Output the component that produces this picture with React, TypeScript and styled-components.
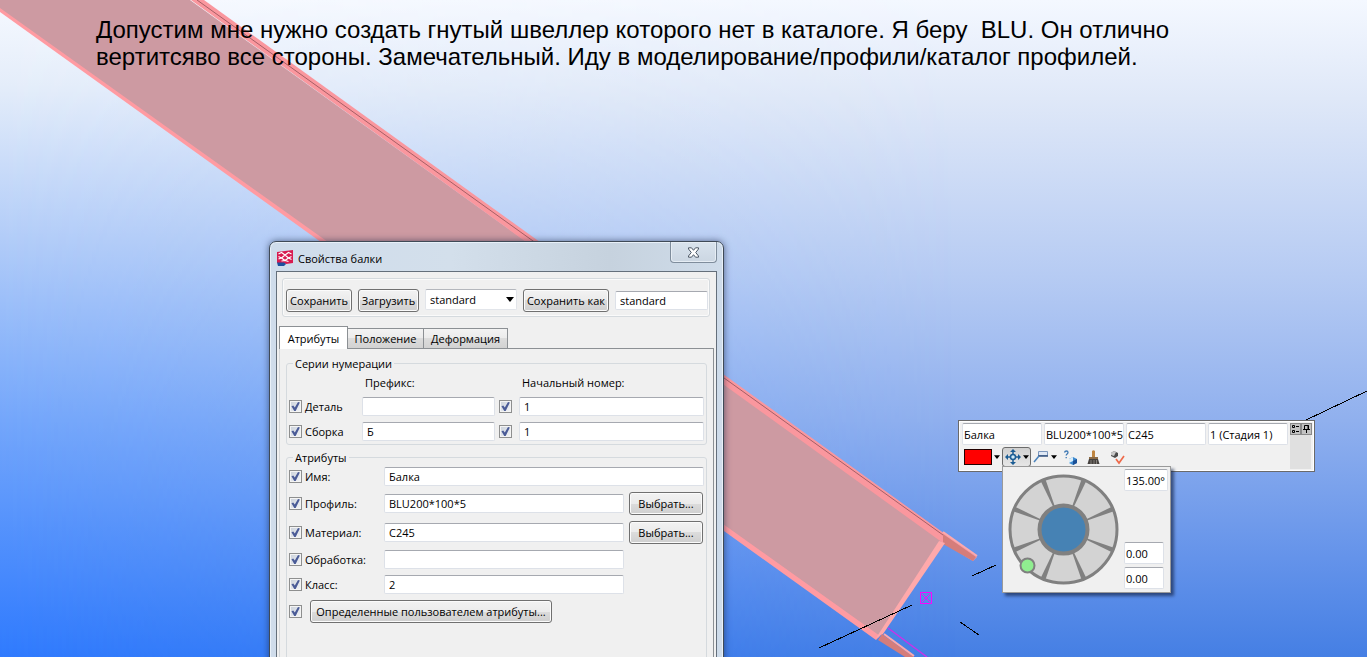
import React from "react";
import styled, { createGlobalStyle, css } from "styled-components";

const Global = createGlobalStyle`
  *, *::before, *::after { box-sizing: border-box; }
  body { margin: 0; }
  body, input, button, select {
    font-family: "Open Sans", "Noto Sans", sans-serif;
    font-size: 11px;
    line-height: 15px;
    color: #000;
  }
`;

/* ---------- model view ---------- */

const Viewport = styled.main`
  position: relative;
  height: 100vh;
  overflow: hidden;
  background: linear-gradient(#f4f8ff 0%, #dfe8f8 15%, #b6cbf3 42%, #90b0ee 64%, #6493ea 85%, #457fe4 100%);

  &::before {
    content: "";
    position: absolute;
    inset: 0;
    background: linear-gradient(#f6f9ff 0%, #e4edfa 13%, #b0cbf8 37%, #73a6fb 64%, #2f7afe 100%);
    mask-image: linear-gradient(90deg, #000, transparent 70%);
  }
`;

const Model = styled.svg`
  position: absolute;
  inset: 0;
  width: 100%;
  height: 100%;
`;

const Caption = styled.p`
  position: relative;
  margin: 0;
  padding: 16px 150px 0 96px;
  font-family: "Liberation Sans", Arial, sans-serif;
  font-size: 24px;
  line-height: 27px;
  white-space: pre-wrap;
`;

/* ---------- shared controls ---------- */

const Field = styled.input<{ $w?: string; $tall?: boolean }>`
  width: ${(p) => p.$w ?? "100%"};
  min-width: 0;
  height: ${(p) => (p.$tall ? 22 : 19)}px;
  padding: ${(p) => (p.$tall ? "0 0 0 1px" : "0 4px")};
  border: 1px solid #dde1e8;
  border-top-color: #a6a9b0;
  border-radius: 2px;
  background: #fff;
  outline: none;
`;

const Button = styled.button<{ $w: number }>`
  flex: none;
  width: ${(p) => p.$w}px;
  height: 23px;
  padding: 0;
  border: 1px solid #707070;
  border-radius: 3px;
  box-shadow: inset 0 0 0 1px #fbfbfb;
  background: linear-gradient(#f2f2f2 0%, #ebebeb 50%, #dcdcdc 50%, #cfcfcf 100%);
  white-space: nowrap;
`;

const Check = styled.input.attrs({ type: "checkbox" })`
  appearance: none;
  position: relative;
  flex: none;
  width: 13px;
  height: 13px;
  margin: 0;
  border: 1px solid #8e8f8f;
  background: linear-gradient(135deg, #c9d0da, #f4f5f7);
  box-shadow: inset 0 0 0 1px #f4f4f4;

  &:checked::after {
    content: "";
    position: absolute;
    inset: 1px;
    background: #4a5b97;
    clip-path: polygon(5% 48%, 25% 40%, 42% 62%, 78% 0, 98% 6%, 52% 100%, 36% 100%);
  }
`;

/* ---------- properties dialog ---------- */

const Dialog = styled.section`
  position: absolute;
  top: 241px;
  left: 269px;
  bottom: -8px;
  display: flex;
  flex-direction: column;
  width: 455px;
  padding: 0 6px;
  border: 1px solid #3f4a57;
  border-radius: 7px;
  box-shadow: inset 0 0 0 1px #e8f0f8, 0 0 7px rgba(20, 30, 60, 0.6);
  background: linear-gradient(90deg, #cfdceb, #d3dfeb 40%, #c6d2de 75%, #cfdcea);
`;

const TitleBar = styled.header`
  display: flex;
  align-items: flex-start;
  justify-content: space-between;
  height: 29px;
`;

const Title = styled.h1`
  display: flex;
  align-items: center;
  gap: 5px;
  margin: 0;
  padding: 8px 0 0 1px;
  font-size: 11px;
  font-weight: 400;
  line-height: 15px;
`;

const CloseButton = styled.button`
  display: flex;
  align-items: center;
  justify-content: center;
  width: 47px;
  height: 21px;
  padding: 0;
  border: 1px solid #7f8d9c;
  border-top: 0;
  border-radius: 0 0 4px 4px;
  background: linear-gradient(#d9e3ed, #cbd6e2);
  box-shadow: inset 0 0 0 1px #e6edf4;
`;

const DialogBody = styled.div`
  flex: 1;
  display: flex;
  flex-direction: column;
  padding: 6px 2px 0;
  border: 1px solid #646f7b;
  border-bottom: 0;
  background: #f0f0f0;
`;

const PresetBar = styled.div`
  display: flex;
  align-items: center;
  gap: 6px;
  margin: 0 4px 9px 3px;
  padding: 10px 1px 4px 3px;
  border: 1px solid #d5dade;
  border-radius: 3px;
  box-shadow: inset 0 0 0 1px #fafafa;
`;

const SelectBox = styled.span`
  position: relative;
  align-self: flex-start;
  flex: none;
  width: 92px;
  height: 21px;

  svg {
    position: absolute;
    right: 3px;
    top: 8px;
    pointer-events: none;
  }
`;

const Select = styled.select`
  appearance: none;
  width: 100%;
  height: 100%;
  padding: 0 4px;
  border: 1px solid #e2e5ea;
  border-top-color: #b4b7bd;
  border-radius: 2px;
  background: #fff;
`;

const TabList = styled.div`
  display: flex;
  align-items: flex-end;
  height: 22px;
`;

const Tab = styled.button<{ $w: number }>`
  width: ${(p) => p.$w}px;
  height: 20px;
  padding: 0;
  border: 1px solid #8c9094;
  border-left-width: 0;
  border-bottom: 0;
  background: linear-gradient(#f3f3f3, #ebebeb 50%, #dcdcdc 50%, #d2d2d2);
  white-space: nowrap;

  &[aria-selected="true"] {
    position: relative;
    height: 23px;
    margin-bottom: -1px;
    border-left-width: 1px;
    background: #fff;
  }
`;

const TabPanel = styled.div`
  flex: 1;
  display: flex;
  flex-direction: column;
  gap: 5px;
  padding: 7px 6px 0;
  border: 1px solid #8c9094;
  border-left-color: #d3d6d9;
  border-bottom: 0;
`;

const Group = styled.fieldset<{ $grow?: boolean }>`
  min-width: 0;
  margin: 0;
  padding: 0 2px;
  border: 1px solid #d5dade;
  border-radius: 3px;
  ${(p) => p.$grow && css`flex: 1;`}
`;

const Legend = styled.legend`
  margin-left: 4px;
  padding: 0 2px;
  line-height: 15px;
`;

const NumberingRow = styled.div<{ $header?: boolean }>`
  display: grid;
  grid-template-columns: 73px 133px 24px 1fr;
  align-items: center;
  height: ${(p) => (p.$header ? 23 : 25)}px;

  > ${Check} {
    margin-left: 4px;
  }
`;

const ColumnTitle = styled.span<{ $col: number }>`
  grid-column: ${(p) => p.$col};
  padding-left: 3px;
`;

const AttributeRow = styled.div<{ $h: number }>`
  display: grid;
  grid-template-columns: 95px 240px 1fr;
  align-items: center;
  height: ${(p) => p.$h}px;

  > ${Button} {
    margin-left: 5px;
  }
`;

const WideField = styled(Field)`
  grid-column: 2 / -1;
`;

const UserRow = styled.div`
  display: flex;
  align-items: center;
  gap: 8px;
  height: 31px;
`;

const Caps = styled.span`
  display: flex;
  align-items: center;
  gap: 3px;
  white-space: nowrap;
`;

/* ---------- contextual toolbar ---------- */

const ContextToolbar = styled.section`
  position: absolute;
  top: 420px;
  left: 958px;
  display: flex;
  gap: 2px;
  width: 357px;
  padding: 2px 3px;
  border: 1px solid #6a6a6a;
  background: #f1f1f1;
  box-shadow: inset 0 0 0 1px #fff;
`;

const ToolbarMain = styled.div`
  flex: 1;
  display: flex;
  flex-direction: column;
  gap: 2px;
`;

const ToolbarFields = styled.div`
  display: grid;
  grid-template-columns: repeat(4, 1fr);
  gap: 2px;
`;

const ToolbarIcons = styled.div`
  display: flex;
  align-items: center;
  height: 22px;
  padding-bottom: 2px;
`;

const ToolButton = styled.button<{ $w: number; $pressed?: boolean }>`
  display: flex;
  align-items: center;
  justify-content: center;
  gap: 2px;
  width: ${(p) => p.$w}px;
  height: 20px;
  padding: 0;
  border: 1px solid transparent;
  border-radius: 3px;
  background: none;
  ${(p) =>
    p.$pressed &&
    css`
      border-color: #6b6b6b;
      background: linear-gradient(#d0d0d0, #e6e6e6);
    `}
`;

const Swatch = styled.span`
  width: 28px;
  height: 16px;
  border: 1px solid #200;
  background: #f00;
`;

const ToolbarSide = styled.div`
  display: flex;
  align-items: flex-start;
  width: 21px;
  background: #e0e0e0;
`;

const SideButton = styled.button`
  display: flex;
  width: 11px;
  height: 12px;
  padding: 0;
  border: 1px solid #8a8a8a;
  background: #c2c2c2;
`;

const RotationPopup = styled.section`
  position: absolute;
  top: 466px;
  left: 1002px;
  display: flex;
  gap: 5px;
  width: 169px;
  height: 127px;
  padding: 2px 2px 3px 5px;
  border: 1px solid #9a9a9a;
  background: #f0f0f0;
  box-shadow: 3px 3px 3px rgba(20, 35, 70, 0.65);
`;

const Wheel = styled.svg`
  flex: none;
  align-self: center;
`;

const AngleFields = styled.div`
  display: flex;
  flex-direction: column;
  gap: 3px;

  > :first-child {
    margin-bottom: auto;
  }
`;

/* ---------- drawings ---------- */

const Caret = ({ w = 6 }: { w?: number }) => (
  <svg width={w} height={w === 6 ? 4 : 5} viewBox="0 0 8 5" aria-hidden="true">
    <path d="M0 0h8L4 5z" fill="#000" />
  </svg>
);

const AppIcon = () => (
  <svg width="16" height="16" viewBox="0 0 16 16" aria-hidden="true">
    <path d="M0 2l16-2v13l-7 1-3-1-6 0z" fill="#d81b50" />
    <path d="M0 12.500h7l2 1.500-2 2H1z" fill="#1d4f9e" />
    <path d="M1.500 4l3-1.500L8 5l3.500-2.500 3 1.500M1.500 6.500l3 1.500L8 5l3.500 3 3-1.500M1.500 9l3-1L8 10.500 11.500 8l3 1.500M4.500 11L8 10.500l3.500 1" fill="none" stroke="#fff" strokeWidth="1.200" />
  </svg>
);

const CloseIcon = () => (
  <svg width="13" height="11" viewBox="0 0 13 11" aria-hidden="true">
    <path d="M1.500.800h3L6.500 3.300 8.500.800h3v1.200L8.700 5.500l2.800 3.500v1.200h-3l-2-2.500-2 2.500h-3V9l2.800-3.500L1.500 2z" fill="#fff" stroke="#4c5866" />
  </svg>
);

const MoveIcon = () => (
  <svg width="16" height="16" viewBox="0 0 16 16" aria-hidden="true">
    <g fill="none" stroke="#1c5d94" strokeWidth="1.500">
      <circle cx="8" cy="8" r="2.500" fill="#cfeaf8" />
      <path d="M8 1v4M8 11v4M1 8h4M11 8h4" />
    </g>
    <path d="M8 0l3 3H5zM8 16l3-3H5zM0 8l3-3v6zM16 8l-3-3v6z" fill="#1c5d94" />
  </svg>
);

const PlaneIcon = () => (
  <svg width="16" height="14" viewBox="0 0 16 14" aria-hidden="true">
    <path d="M5.500 1.500h9v4h-9z" fill="#dfe8f5" stroke="#7c97bd" />
    <path d="M5 6h10" stroke="#33507c" strokeWidth="1.500" />
    <path d="M1 12l5-6" stroke="#4b83bb" strokeWidth="1.500" />
  </svg>
);

const AskIcon = () => (
  <svg width="15" height="15" viewBox="0 0 15 15" aria-hidden="true">
    <path d="M1.500 2.500C2 .500 5 .500 5 2.500 5 4 3.200 4 3.200 5.500M3.200 7v1.300" fill="none" stroke="#3d78b4" strokeWidth="1.300" />
    <path d="M6 9l4-2 4 2v4l-4 2-4-2z" fill="#3d8ad0" />
    <path d="M6 9l4-2v4l-4 2z" fill="#d9eefb" />
    <path d="M10 11l4-2v4l-4 2z" fill="#1b4f95" />
  </svg>
);

const BrushIcon = () => (
  <svg width="13" height="15" viewBox="0 0 13 15" aria-hidden="true">
    <path d="M5 1q1.500-1.500 3 0v6H5z" fill="#c0853f" />
    <path d="M2 7h9v2H2z" fill="#8c6b45" />
    <path d="M2 9h9l1.500 5H.500z" fill="#45413e" />
    <path d="M4 10v4M7 10v4M9.500 10v4" stroke="#85807b" />
  </svg>
);

const VerifyIcon = () => (
  <svg width="15" height="15" viewBox="0 0 15 15" aria-hidden="true">
    <path d="M1 3l3-2 4 2v3L5 8 1 6z" fill="#4b4b4b" />
    <path d="M1 3l3-2 2 1-2 4-3-1z" fill="#c9c9c9" />
    <path d="M6 9l3 4 5-7" fill="none" stroke="#ee6a4a" strokeWidth="1.700" />
  </svg>
);

const spokes = [22.5, 67.5, 112.5, 157.5, 202.5, 247.5, 292.5, 337.5];

const Scene = () => (
  <Model viewBox="0 0 1367 657" preserveAspectRatio="xMinYMin slice" aria-hidden="true">
    <path d="M0 0H190L943 541L878 638L0 9z" fill="#cd9aa2" />
    <path d="M0 8L880 636L876 640L0 12z" fill="#ff9ba2" />
    <path d="M191 0H204L977 557L973 561L943 543z" fill="#fa979e" />
    <path d="M943 534L976 557L973 561L943 544z" fill="#d57d7b" />
    <path d="M943 532L977 556" stroke="#ffa9ab" strokeWidth="2" />
    <path d="M197 0L943 535" stroke="#a65f66" />
    <path d="M939 541L945 543L883 634L876 638z" fill="#ffa9ab" />
    <path d="M882 634L914 657H905L878 640z" fill="#d57d7b" />
    <path d="M884 634L914 656" stroke="#ffa9ab" strokeWidth="2" />
    <g fill="none" stroke="#000" shapeRendering="crispEdges">
      <path d="M819 648L912 605M972 576L996 565M960 622L979 635M1304 421L1367 391" />
    </g>
    <g fill="none" stroke="#f0f">
      <path d="M888 628L927 657" stroke="#c832ea" strokeWidth="1.500" />
      <path d="M920.500 592.500h11v11h-11zM922 594l8 8M930 594l-8 8" />
    </g>
  </Model>
);

/* ---------- composition ---------- */

const Toggle = ({ id, label }: { id: string; label: string }) => (
  <Caps>
    <Check id={id} defaultChecked />
    <label htmlFor={id}>{label}</label>
  </Caps>
);

const attributes = [
  { id: "name", label: "Имя:", value: "Балка", h: 23, wide: true },
  { id: "profile", label: "Профиль:", value: "BLU200*100*5", h: 31, pick: true },
  { id: "material", label: "Материал:", value: "C245", h: 27, pick: true },
  { id: "finish", label: "Обработка:", value: "", h: 27 },
  { id: "class", label: "Класс:", value: "2", h: 23 },
];

const BeamProperties = () => (
  <Dialog role="dialog" aria-labelledby="dialog-title">
    <TitleBar>
      <Title id="dialog-title">
        <AppIcon />
        Свойства балки
      </Title>
      <CloseButton aria-label="Закрыть">
        <CloseIcon />
      </CloseButton>
    </TitleBar>
    <DialogBody>
      <PresetBar>
        <Button $w={66}>Сохранить</Button>
        <Button $w={61}>Загрузить</Button>
        <SelectBox>
          <Select aria-label="Набор" defaultValue="standard">
            <option>standard</option>
          </Select>
          <Caret w={8} />
        </SelectBox>
        <Button $w={86}>Сохранить как</Button>
        <Field aria-label="Имя набора" defaultValue="standard" />
      </PresetBar>
      <TabList role="tablist">
        <Tab role="tab" aria-selected="true" $w={69}>Атрибуты</Tab>
        <Tab role="tab" aria-selected="false" $w={76}>Положение</Tab>
        <Tab role="tab" aria-selected="false" $w={84}>Деформация</Tab>
      </TabList>
      <TabPanel role="tabpanel">
        <Group>
          <Legend>Серии нумерации</Legend>
          <NumberingRow $header>
            <ColumnTitle $col={2}>Префикс:</ColumnTitle>
            <ColumnTitle $col={4}>Начальный номер:</ColumnTitle>
          </NumberingRow>
          <NumberingRow>
            <Toggle id="part" label="Деталь" />
            <Field aria-label="Префикс детали" />
            <Check aria-label="Номер детали" defaultChecked />
            <Field aria-label="Начальный номер детали" defaultValue="1" />
          </NumberingRow>
          <NumberingRow>
            <Toggle id="assembly" label="Сборка" />
            <Field aria-label="Префикс сборки" defaultValue="Б" />
            <Check aria-label="Номер сборки" defaultChecked />
            <Field aria-label="Начальный номер сборки" defaultValue="1" />
          </NumberingRow>
        </Group>
        <Group $grow>
          <Legend>Атрибуты</Legend>
          {attributes.map((a) => {
            const Box = a.wide ? WideField : Field;
            return (
              <AttributeRow key={a.id} $h={a.h}>
                <Toggle id={a.id} label={a.label} />
                <Box aria-label={a.label} defaultValue={a.value} />
                {a.pick && <Button $w={74}>Выбрать...</Button>}
              </AttributeRow>
            );
          })}
          <UserRow>
            <Check aria-label="Определенные пользователем атрибуты" defaultChecked />
            <Button $w={242}>Определенные пользователем атрибуты...</Button>
          </UserRow>
        </Group>
      </TabPanel>
    </DialogBody>
  </Dialog>
);

const QuickToolbar = () => (
  <ContextToolbar aria-label="Контекстная панель">
    <ToolbarMain>
      <ToolbarFields>
        <Field $tall aria-label="Имя" defaultValue="Балка" />
        <Field $tall aria-label="Профиль" defaultValue="BLU200*100*5" />
        <Field $tall aria-label="Материал" defaultValue="C245" />
        <Field $tall aria-label="Стадия" defaultValue="1 (Стадия 1)" />
      </ToolbarFields>
      <ToolbarIcons>
        <ToolButton $w={40} aria-label="Цвет"><Swatch /><Caret /></ToolButton>
        <ToolButton $w={29} $pressed aria-label="Положение"><MoveIcon /><Caret /></ToolButton>
        <ToolButton $w={27} aria-label="Плоскость"><PlaneIcon /><Caret /></ToolButton>
        <ToolButton $w={24} aria-label="Запрос"><AskIcon /></ToolButton>
        <ToolButton $w={23} aria-label="Копировать свойства"><BrushIcon /></ToolButton>
        <ToolButton $w={24} aria-label="Проверка"><VerifyIcon /></ToolButton>
      </ToolbarIcons>
    </ToolbarMain>
    <ToolbarSide>
      <SideButton aria-label="Настройка">
        <svg width="9" height="10" viewBox="0 0 9 10" aria-hidden="true">
          <path d="M1.500 1.500h2v2h-2zM1.500 6.500h2v2h-2zM5 2.500h3M5 7.500h3" fill="none" stroke="#000" />
        </svg>
      </SideButton>
      <SideButton aria-label="Закрепить">
        <svg width="9" height="10" viewBox="0 0 9 10" aria-hidden="true">
          <path d="M2.500 5V1.500h4V5M6 1v4M1 5.500h7M4.500 6v3" fill="none" stroke="#000" />
        </svg>
      </SideButton>
    </ToolbarSide>
  </ContextToolbar>
);

const Rotation = () => (
  <RotationPopup aria-label="Поворот">
    <Wheel width="111" height="111" viewBox="0 0 111 111" aria-hidden="true">
      <circle cx="55.500" cy="55.500" r="53.500" fill="#d3d3d3" stroke="#808080" strokeWidth="3" />
      {spokes.map((a) => (
        <path key={a} d="M54.700 31L53 2h5L56.300 31z" fill="#808080" transform={`rotate(${a} 55.500 55.500)`} />
      ))}
      <circle cx="55.500" cy="55.500" r="24" fill="#4682b4" stroke="#808080" strokeWidth="4" />
      <circle cx="19.500" cy="91.500" r="7" fill="#90ee90" stroke="#808080" strokeWidth="2" />
    </Wheel>
    <AngleFields>
      <Field $tall $w="44px" aria-label="Угол" defaultValue="135.00°" />
      <Field $tall $w="40px" aria-label="Смещение по вертикали" defaultValue="0.00" />
      <Field $tall $w="40px" aria-label="Смещение по горизонтали" defaultValue="0.00" />
    </AngleFields>
  </RotationPopup>
);

export default function App() {
  return (
    <>
      <Global />
      <Viewport>
        <Scene />
        <Caption>
          {"Допустим мне нужно создать гнутый швеллер которого нет в каталоге. Я беру  BLU. Он отлично\nвертитсяво все стороны. Замечательный. Иду в моделирование/профили/каталог профилей."}
        </Caption>
        <BeamProperties />
        <QuickToolbar />
        <Rotation />
      </Viewport>
    </>
  );
}
